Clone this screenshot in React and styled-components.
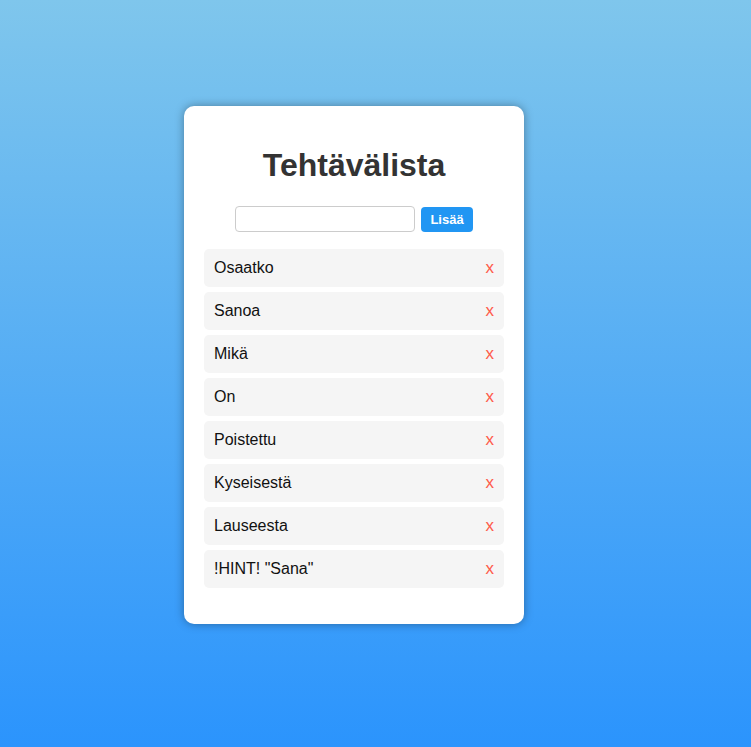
import React, { useState } from 'react';
import styled, { createGlobalStyle } from 'styled-components';

const GlobalStyle = createGlobalStyle`
  html, body {
    margin: 0;
    padding: 0;
  }
  body {
    min-height: 100vh;
    background: linear-gradient(to bottom, #7fc6ec, #2b94fd);
    font-family: "Liberation Sans", Arial, sans-serif;
  }
`;

const Page = styled.div`
  padding: 106px 0 0 184px;
`;

const Card = styled.div`
  width: 300px;
  padding: 20px;
  background: #fff;
  border-radius: 10px;
  box-shadow: 0 0 10px rgba(0, 0, 0, 0.35);
`;

const Title = styled.h1`
  margin: 21px 0 22px;
  font-size: 32px;
  line-height: 37px;
  font-weight: bold;
  color: #333;
  text-align: center;
`;

const Form = styled.form`
  display: flex;
  justify-content: center;
  align-items: center;
  gap: 6px;
  margin-bottom: 17px;
`;

const Input = styled.input`
  box-sizing: border-box;
  width: 180px;
  height: 26px;
  border: 1px solid #ccc;
  border-radius: 4px;
  padding: 4px 8px;
  font-size: 14px;
  font-family: inherit;
`;

const AddButton = styled.button`
  width: 52px;
  height: 25px;
  padding: 0;
  border: none;
  border-radius: 4px;
  background: #2196f3;
  color: #fff;
  font-weight: bold;
  font-size: 13px;
  font-family: inherit;
  cursor: pointer;
`;

const List = styled.ul`
  list-style: none;
  margin: 0 0 16px;
  padding: 0;
`;

const Item = styled.li`
  display: flex;
  justify-content: space-between;
  align-items: center;
  height: 38px;
  box-sizing: border-box;
  padding: 0 10px;
  margin-bottom: 5px;
  background: #f5f5f5;
  border-radius: 5px;
  font-size: 16px;
  color: #111;
`;

const Remove = styled.button`
  border: none;
  background: none;
  padding: 0;
  color: #ff5a4a;
  font-size: 17px;
  font-family: inherit;
  cursor: pointer;
`;

const initial = ['Osaatko', 'Sanoa', 'Mikä', 'On', 'Poistettu', 'Kyseisestä', 'Lauseesta', '!HINT! "Sana"'];

export default function App() {
  const [tasks, setTasks] = useState(initial);
  const [text, setText] = useState('');

  const addTask = (e) => {
    e.preventDefault();
    if (!text.trim()) return;
    setTasks([...tasks, text.trim()]);
    setText('');
  };

  return (
    <>
      <GlobalStyle />
      <Page>
        <Card>
          <Title>Tehtävälista</Title>
          <Form onSubmit={addTask}>
            <Input value={text} onChange={(e) => setText(e.target.value)} />
            <AddButton type="submit">Lisää</AddButton>
          </Form>
          <List>
            {tasks.map((t, i) => (
              <Item key={i}>
                {t}
                <Remove onClick={() => setTasks(tasks.filter((_, j) => j !== i))}>x</Remove>
              </Item>
            ))}
          </List>
        </Card>
      </Page>
    </>
  );
}
